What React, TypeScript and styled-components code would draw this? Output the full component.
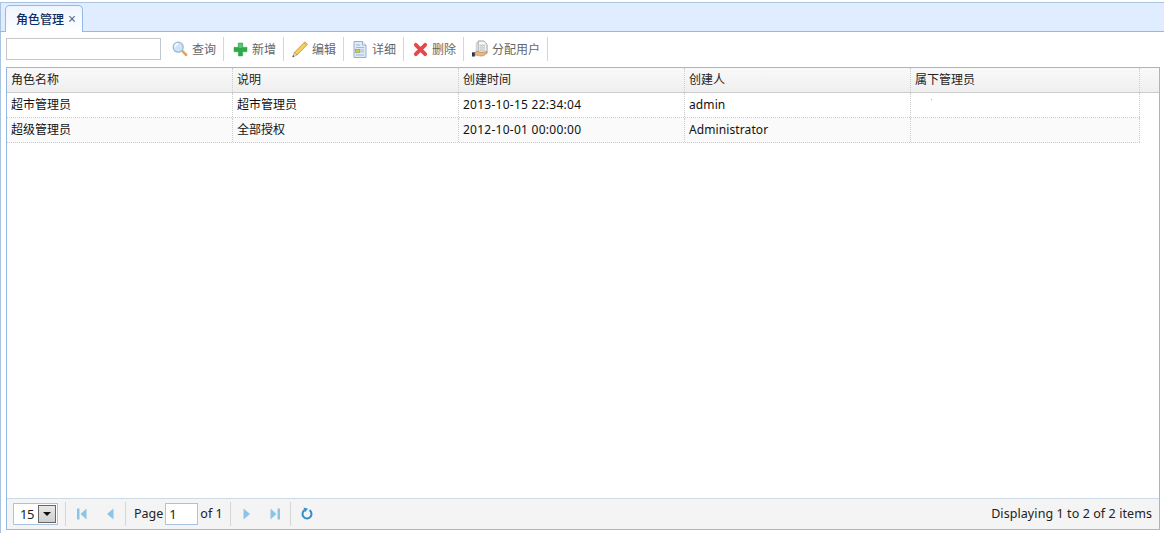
import React from "react";
import styled, { createGlobalStyle } from "styled-components";

const Global = createGlobalStyle`
  html, body { margin: 0; padding: 0; background: #fff; height: 100%; }
  #root { height: 533px; }
  * { box-sizing: border-box; }
  body { font: 12px "Noto Sans", "Noto Sans CJK SC", sans-serif; color: #222; }
`;
const Page = styled.div`
  width: 1164px; height: 533px; display: flex; flex-direction: column; overflow: hidden;
  padding-top: 2px;
`;
const TabBar = styled.div`
  height: 30px; flex: none; background: #e0ecff; border-top: 1px solid #a9c4e2; border-left: 1px solid #a9c4e2; border-bottom: 1px solid #95b8e7;
  padding: 2px 0 0 4px; display: flex;
`;
const Tab = styled.div`
  width: 78px; height: 27px; background: linear-gradient(#eff5ff, #f8fbff 60%, #fff); border: 1px solid #95b8e7; border-bottom: 0;
  border-radius: 5px 5px 0 0; display: flex; align-items: center; padding-left: 10px; gap: 4px; margin-bottom: -1px;
  color: #0e2d5f; font-weight: 500;
`;
const Close = styled.span` color: #66738a; font-size: 14px; line-height: 1; `;
const Body = styled.div`
  flex: 1; min-height: 0; display: flex; flex-direction: column; border-left: 1px solid #a9c4e2; padding: 0 4px 3px 5px;
`;
const Toolbar = styled.div` height: 35px; flex: none; display: flex; align-items: center; padding-bottom: 1px; `;
const Search = styled.input`
  width: 155px; height: 22px; border: 1px solid #c4c8cc; background: #fff; margin-right: 3px; padding: 0 4px; outline: none;
`;
const ToolButton = styled.div<{ $w: number }>`
  width: ${p => p.$w}px; height: 24px; flex: none; display: flex; align-items: center; padding-left: 8px; gap: 4px; color: #666; white-space: nowrap;
`;
const IconBox = styled.span`
  width: 16px; height: 18px; flex: none; display: flex; align-items: center; justify-content: center;
`;
const Sep = styled.div` width: 1px; height: 24px; flex: none; background: #d4d6d8; `;
const Grid = styled.div`
  flex: 1; min-height: 0; display: flex; flex-direction: column; border: 1px solid #95b8e7;
`;
const HeadRow = styled.div`
  height: 25px; flex: none; display: flex; background: linear-gradient(#f9f9f9, #efefef); border-bottom: 1px solid #ccc;
`;
const Row = styled.div<{ $alt?: boolean }>`
  height: 25px; flex: none; display: flex; width: 1133px; background: ${p => (p.$alt ? "#fafafa" : "#fff")};
  border-bottom: 1px dotted #ccc; color: #111;
`;
const Cell = styled.div<{ $w: number }>`
  width: ${p => p.$w}px; flex: none; padding: 0 0 2px 4px; display: flex; align-items: center; border-right: 1px dotted #ccc; white-space: nowrap;
`;
const Spaced = styled.span<{ $sp: number }>` letter-spacing: ${p => p.$sp}px; `;
const Speck = styled.span` width: 1px; height: 1px; background: #aaa; margin: 0 0 10px 16px; `;
const Fill = styled.div` flex: 1; `;
const Pager = styled.div`
  height: 31px; flex: none; display: flex; align-items: center; background: #f4f4f4; border-top: 1px solid #ccd9e6; padding: 0 6px;
`;
const PageSel = styled.div`
  width: 45px; height: 22px; margin-right: 7px; background: #fff; border: 1px solid #a9c4e2; display: flex; align-items: center;
  justify-content: space-between; padding: 0 1px 0 6px; font-size: 13px; letter-spacing: -0.5px;
`;
const SelBtn = styled.div`
  width: 18px; height: 18px; background: linear-gradient(#e8e8e8, #cfcfcf); border: 1px solid #666; display: flex; align-items: center; justify-content: center;
  &::after { content: ""; border: 4px solid transparent; border-top: 4px solid #111; border-bottom: 0; }
`;
const PagerSep = styled.div` width: 1px; height: 24px; flex: none; background: #d6d6d6; `;
const PagerBtn = styled.div`
  width: 28px; height: 24px; flex: none; display: flex; align-items: center; justify-content: center;
`;
const PagerGroup = styled.div<{ $l: number; $r: number }>` display: flex; align-items: center; padding: 0 ${p => p.$r}px 0 ${p => p.$l}px; `;
const PageLabel = styled.span` color: #222; font-size: 12.5px; line-height: 16px; padding-bottom: 1px; white-space: nowrap; `;
const PageInput = styled.div`
  width: 33px; height: 22px; margin: 0 2px; background: #fff; border: 1px solid #a9c4e2; padding-left: 3px; display: flex; align-items: center; font-size: 13px;
`;
const Info = styled.div` margin-left: auto; padding: 0 1px 1px 0; font-size: 12.5px; letter-spacing: 0.08px; color: #222; white-space: nowrap; `;

const SearchIcon = () => (
  <svg width="16" height="16" viewBox="0 0 16 16">
    <path d="M9.300 10.300l1.300-1.300 4.300 4.100c.9 1-.6 2.500-1.600 1.600z" fill="#e2a55c" stroke="#c98a45" strokeWidth="0.4" />
    <circle cx="6.200" cy="6.200" r="5" fill="#cfe4f8" stroke="#9cb9d4" strokeWidth="1.300" />
    <path d="M3 6.200a3.200 3.200 0 0 1 3.200-3.200" stroke="#fff" strokeWidth="1.400" fill="none" />
  </svg>
);
const PlusIcon = () => (
  <svg width="15" height="15" viewBox="0 0 15 15">
    <path d="M5.300 1h4.400v4.300H14v4.400H9.700V14H5.300V9.700H1V5.300h4.300z" fill="#2ea84a" stroke="#2ea84a" strokeWidth="0.5" strokeLinejoin="round" />
    <path d="M6 1.600h3V6H6z" fill="#58c96e" />
  </svg>
);
const PencilIcon = () => (
  <svg width="16" height="17" viewBox="0 0 16 17">
    <path d="M13 .8l2.500 2.500L5 14 2.300 11.500z" fill="#f3cf5c" stroke="#b08a38" strokeWidth="0.7" />
    <path d="M12 1.800l2.500 2.500" stroke="#e8a23c" strokeWidth="1" />
    <path d="M2.300 11.500L.6 16 5 14z" fill="#f5e2b8" stroke="#8a7a55" strokeWidth="0.5" />
    <path d="M.6 16l.6-1.700 1.100 1z" fill="#222" />
  </svg>
);
const DocIcon = () => (
  <svg width="14" height="17" viewBox="0 0 14 17">
    <path d="M1 .5h8.500l3.500 3.500v12.500H1z" fill="#dfeaf6" stroke="#8fb0cf" />
    <path d="M9.500 .5V4h3.500" fill="#fff" stroke="#8fb0cf" />
    <path d="M3 4h4M3 6.500h8M8 9h3M8 11h3M3 14h8" stroke="#9bbbd6" />
    <rect x="2.500" y="8.500" width="4.500" height="3" fill="#d8c848" stroke="#6f8f3f" strokeWidth="0.5" />
  </svg>
);
const DeleteIcon = () => (
  <svg width="15" height="15" viewBox="0 0 15 15">
    <path d="M2.800 2.800l9.400 9.400M12.200 2.800l-9.400 9.400" stroke="#e5484a" strokeWidth="3.800" strokeLinecap="round" />
  </svg>
);
const AssignIcon = () => (
  <svg width="17" height="18" viewBox="0 0 17 18">
    <path d="M6.500 .5h6l3.500 3.500v9.500H6.500z" fill="#f6f6f6" stroke="#9a9a9a" />
    <path d="M4.500 2.500h2v11h-2z" fill="#e6e6e6" stroke="#b0b0b0" strokeWidth="0.6" />
    <path d="M8 5h6M8 7h6M8 9h6M8 11h6" stroke="#b5b5b5" />
    <path d="M3 12.500c2-1.500 4-1 5.500 0l3 .2c1.500-.3 3-1 4.500-1-.5 2.500-3 4.800-6 4.800-2.500 0-4-1-7-1z" fill="#e8b67e" stroke="#b5773a" strokeWidth="0.6" />
    <rect x="0" y="12.500" width="3" height="4.500" fill="#2a3550" />
  </svg>
);

const First = () => (
  <svg width="12" height="14" viewBox="0 0 12 14"><rect x="1" y="1.500" width="2.500" height="11" fill="#8cc4e8" /><path d="M10.500 1.500v11L4.500 7z" fill="#8cc4e8" /></svg>
);
const Prev = () => (
  <svg width="12" height="14" viewBox="0 0 12 14"><path d="M9.500 1.500v11L3 7z" fill="#8cc4e8" /></svg>
);
const Next = () => (
  <svg width="12" height="14" viewBox="0 0 12 14"><path d="M2.500 1.500v11L9 7z" fill="#8cc4e8" /></svg>
);
const Last = () => (
  <svg width="12" height="14" viewBox="0 0 12 14"><path d="M1.500 1.500v11L7.500 7z" fill="#8cc4e8" /><rect x="8.500" y="1.500" width="2.500" height="11" fill="#8cc4e8" /></svg>
);
const Refresh = () => (
  <svg width="14" height="14" viewBox="0 0 14 14">
    <path d="M4.500 3.200a4.500 4.500 0 1 0 5 0" fill="none" stroke="#2f8fce" strokeWidth="2" />
    <path d="M3.500 .5l4.500 1.200-3 3.500z" fill="#2f8fce" />
  </svg>
);

const buttons: { label: string; icon: React.ReactNode; w: number }[] = [
  { label: "查询", icon: <SearchIcon />, w: 59 },
  { label: "新增", icon: <PlusIcon />, w: 59 },
  { label: "编辑", icon: <PencilIcon />, w: 59 },
  { label: "详细", icon: <DocIcon />, w: 59 },
  { label: "删除", icon: <DeleteIcon />, w: 59 },
  { label: "分配用户", icon: <AssignIcon />, w: 83 },
];
const headers = ["角色名称", "说明", "创建时间", "创建人", "属下管理员"];
const widths = [226, 226, 226, 226, 229];
const rows: { name: string; desc: string; time: string; user: string; speck: boolean }[] = [
  { name: "超市管理员", desc: "超市管理员", time: "2013-10-15 22:34:04", user: "admin", speck: true },
  { name: "超级管理员", desc: "全部授权", time: "2012-10-01 00:00:00", user: "Administrator", speck: false },
];

export default function App() {
  return (
    <Page>
      <Global />
      <TabBar>
        <Tab>角色管理<Close>×</Close></Tab>
      </TabBar>
      <Body>
        <Toolbar>
          <Search />
          {buttons.map(b => (
            <React.Fragment key={b.label}>
              <ToolButton $w={b.w}><IconBox>{b.icon}</IconBox>{b.label}</ToolButton>
              <Sep />
            </React.Fragment>
          ))}
        </Toolbar>
        <Grid>
          <HeadRow>
            {headers.map((h, i) => <Cell key={h} $w={widths[i]}>{h}</Cell>)}
          </HeadRow>
          {rows.map((r, i) => (
            <Row key={i} $alt={i === 1}>
              <Cell $w={widths[0]}>{r.name}</Cell>
              <Cell $w={widths[1]}>{r.desc}</Cell>
              <Cell $w={widths[2]}><Spaced $sp={0.26}>{r.time}</Spaced></Cell>
              <Cell $w={widths[3]}><Spaced $sp={0.1}>{r.user}</Spaced></Cell>
              <Cell $w={widths[4]}>{r.speck && <Speck />}</Cell>
            </Row>
          ))}
          <Fill />
          <Pager>
            <PageSel>15<SelBtn /></PageSel>
            <PagerSep />
            <PagerGroup $l={2} $r={1}>
              <PagerBtn><First /></PagerBtn>
              <PagerBtn><Prev /></PagerBtn>
            </PagerGroup>
            <PagerSep />
            <PagerGroup $l={8} $r={7}>
              <PageLabel>Page</PageLabel>
              <PageInput>1</PageInput>
              <PageLabel>of 1</PageLabel>
            </PagerGroup>
            <PagerSep />
            <PagerGroup $l={2} $r={1}>
              <PagerBtn><Next /></PagerBtn>
              <PagerBtn><Last /></PagerBtn>
            </PagerGroup>
            <PagerSep />
            <PagerGroup $l={2} $r={0}>
              <PagerBtn><Refresh /></PagerBtn>
            </PagerGroup>
            <Info>Displaying 1 to 2 of 2 items</Info>
          </Pager>
        </Grid>
      </Body>
    </Page>
  );
}
